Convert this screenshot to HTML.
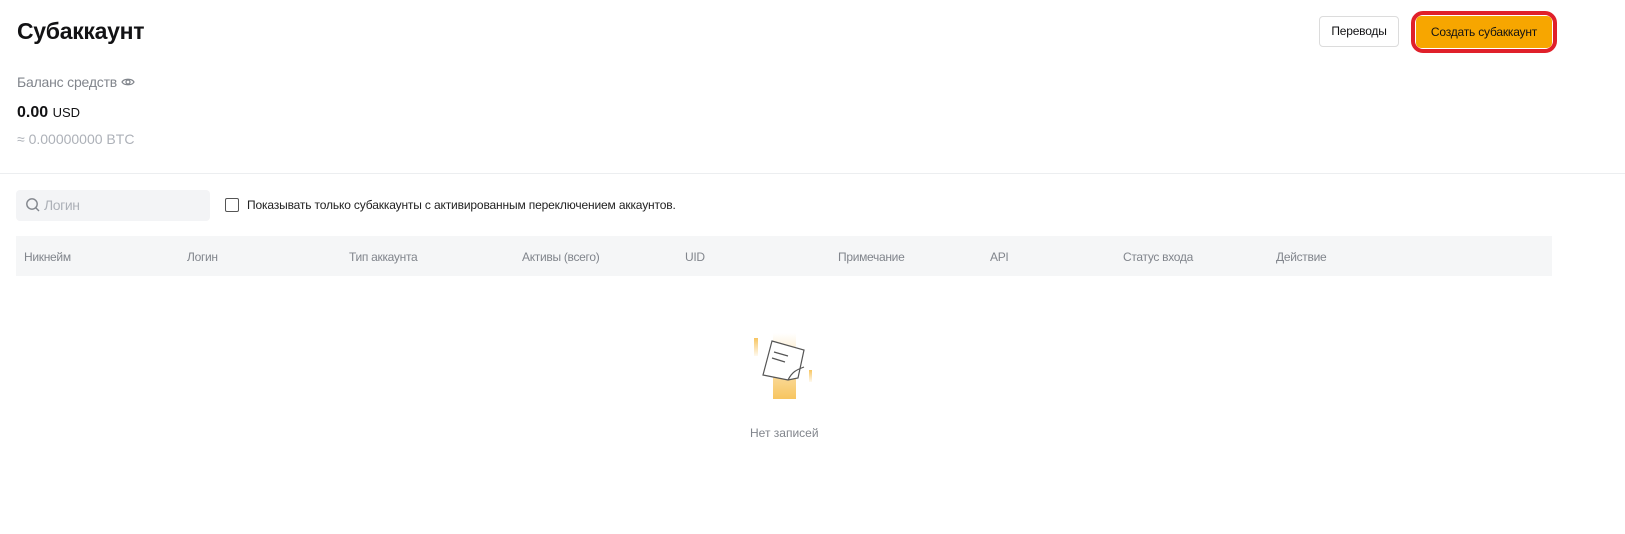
<!DOCTYPE html>
<html><head><meta charset="utf-8"><style>
body{margin:0;width:1625px;height:534px;background:#fff;font-family:"Liberation Sans",sans-serif;position:relative;overflow:hidden;color:#121214}
.a{position:absolute;white-space:nowrap}
</style></head><body>
<div class="a" style="left:17px;top:18px;font-size:23px;font-weight:bold;letter-spacing:-0.3px">Субаккаунт</div>
<div class="a" style="left:1319px;top:16px;width:80px;height:31px;border:1px solid #dcdcdc;border-radius:4px;box-sizing:border-box;font-size:12px;text-align:center;line-height:29px;letter-spacing:-0.2px">Переводы</div>
<div class="a" style="left:1411px;top:11px;width:146px;height:42px;border:4px solid #e0202a;border-radius:12px;box-sizing:border-box"></div>
<div class="a" style="left:1416px;top:16px;width:136px;height:32px;background:#f7a600;border-radius:5px;font-size:12px;text-align:center;line-height:32px;letter-spacing:-0.2px">Создать субаккаунт</div>
<div class="a" style="left:17px;top:74px;font-size:14px;color:#81858c;letter-spacing:-0.2px">Баланс средств
<svg width="14" height="12" viewBox="0 0 14 12" style="vertical-align:-1px"><path d="M1 6C3 2.3 11 2.3 13 6C11 9.7 3 9.7 1 6Z" fill="none" stroke="#81858c" stroke-width="1.3"/><circle cx="7" cy="6" r="2" fill="none" stroke="#81858c" stroke-width="1.3"/></svg></div>
<div class="a" style="left:17px;top:104px;font-size:16px;font-weight:bold">0.00 <span style="font-size:13px;font-weight:normal">USD</span></div>
<div class="a" style="left:17px;top:131px;font-size:14px;color:#adb1b8">≈ 0.00000000 BTC</div>
<div class="a" style="left:0;top:173px;width:1625px;height:1px;background:#eceef0"></div>
<div class="a" style="left:16px;top:190px;width:194px;height:31px;background:#f3f4f6;border-radius:4px"></div>
<svg class="a" style="left:25px;top:197px" width="16" height="16" viewBox="0 0 16 16"><circle cx="7" cy="7" r="5.2" fill="none" stroke="#81858c" stroke-width="1.4"/><path d="M11 11L14 14" stroke="#81858c" stroke-width="1.4"/></svg>
<div class="a" style="left:44px;top:197px;font-size:14px;color:#adb1b8;letter-spacing:-0.4px">Логин</div>
<div class="a" style="left:225px;top:198px;width:14px;height:14px;border:1px solid #555;border-radius:2px;box-sizing:border-box"></div>
<div class="a" style="left:247px;top:198px;font-size:12px;letter-spacing:-0.15px;color:#222">Показывать только субаккаунты с активированным переключением аккаунтов.</div>
<div class="a" style="left:16px;top:236px;width:1536px;height:40px;background:#f5f6f7"></div>
<div style="font-size:12px;color:#81858c;letter-spacing:-0.3px">
<div class="a" style="left:24px;top:250px">Никнейм</div>
<div class="a" style="left:187px;top:250px">Логин</div>
<div class="a" style="left:349px;top:250px">Тип аккаунта</div>
<div class="a" style="left:522px;top:250px">Активы (всего)</div>
<div class="a" style="left:685px;top:250px">UID</div>
<div class="a" style="left:838px;top:250px">Примечание</div>
<div class="a" style="left:990px;top:250px">API</div>
<div class="a" style="left:1123px;top:250px">Статус входа</div>
<div class="a" style="left:1276px;top:250px">Действие</div>
</div>
<svg class="a" style="left:750px;top:330px" width="70" height="72" viewBox="0 0 70 72">
<defs><linearGradient id="g" x1="0" y1="0" x2="0" y2="1"><stop offset="0" stop-color="#f7c560" stop-opacity="0"/><stop offset="1" stop-color="#f7c560"/></linearGradient>
<linearGradient id="g2" x1="0" y1="0" x2="0" y2="1"><stop offset="0" stop-color="#f7c560"/><stop offset="1" stop-color="#f7c560" stop-opacity="0.1"/></linearGradient></defs>
<rect x="23" y="3" width="23" height="66" fill="url(#g)"/>
<rect x="4" y="8" width="4" height="18" fill="url(#g2)"/>
<rect x="59" y="40" width="3" height="12" fill="url(#g2)"/>
<path d="M22 11L54 20L48 48L38 50L13 45Z" fill="#fff" stroke="#555" stroke-width="1.2"/>
<path d="M24 22L38 26M22 28L35 32" stroke="#555" stroke-width="1.2"/>
<path d="M38 50C42 42 46 40 54 37" fill="none" stroke="#555" stroke-width="1.2"/>
</svg>
<div class="a" style="left:750px;top:426px;font-size:12px;color:#81858c">Нет записей</div>
</body></html>
